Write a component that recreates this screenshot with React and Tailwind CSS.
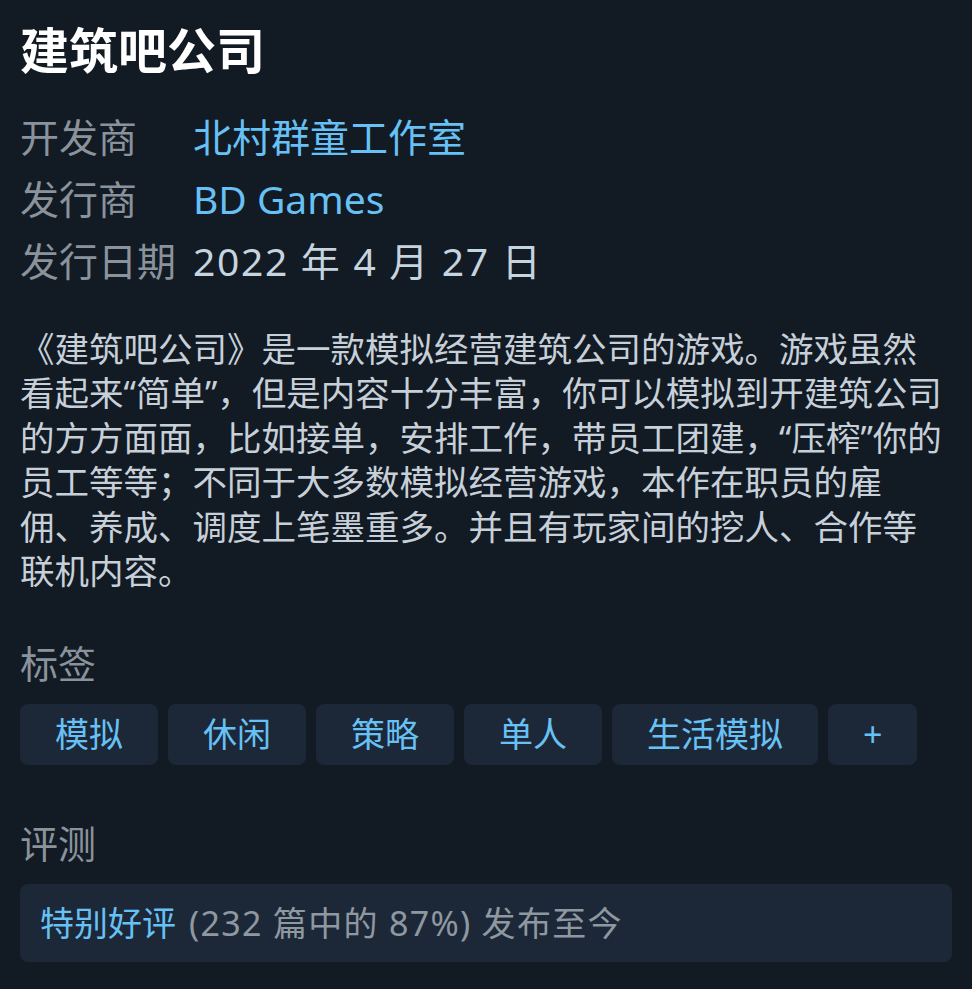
const FONT = { fontFamily: '"Noto Sans", "Noto Sans CJK SC", sans-serif' };

const TAGS = ['模拟', '休闲', '策略', '单人', '生活模拟', '+'];

function InfoRow({ label, children, valueClass }) {
  return (
    <div className="flex leading-[62px] text-[39px]">
      <span className="w-[173px] shrink-0 text-[#8a939c]">{label}</span>
      <span className={valueClass}>{children}</span>
    </div>
  );
}

export default function App() {
  return (
    <div className="min-h-screen w-[972px] h-[989px] overflow-hidden bg-[#121a24] px-5 pt-5" style={FONT}>
      {/* Title */}
      <h1 className="text-[49px] leading-[60px] font-bold text-white">建筑吧公司</h1>

      {/* Meta rows */}
      <div className="mt-[26px]">
        <InfoRow label="开发商" valueClass="text-[#67c1f5]">北村群童工作室</InfoRow>
        <InfoRow label="发行商" valueClass="text-[#67c1f5]">BD Games</InfoRow>
        <InfoRow label="发行日期" valueClass="text-[#c6d4df] tracking-[1.7px]">2022 年 4 月 27 日</InfoRow>
      </div>

      {/* Description */}
      <p className="mt-[35px] text-[34.5px] leading-[44.4px] text-[#c7d0d8] w-[928px]">
        《建筑吧公司》是一款模拟经营建筑公司的游戏。游戏虽然看起来“简单”，但是内容十分丰富，你可以模拟到开建筑公司的方方面面，比如接单，安排工作，带员工团建，“压榨”你的员工等等；不同于大多数模拟经营游戏，本作在职员的雇佣、养成、调度上笔墨重多。并且有玩家间的挖人、合作等联机内容。
      </p>

      {/* Tags */}
      <div className="mt-[45px] text-[38px] leading-[50px] text-[#8a939c]">标签</div>
      <div className="mt-4 flex gap-[10px]">
        {TAGS.map((t) => (
          <span
            key={t}
            className="h-[61px] px-[35px] flex items-center rounded-lg bg-[#1c2838] text-[34px] text-[#67c1f5]"
          >
            {t}
          </span>
        ))}
      </div>

      {/* Reviews */}
      <div className="mt-[53px] text-[38px] leading-[50px] text-[#8a939c]">评测</div>
      <div className="mt-4 h-[78px] w-[932px] rounded-lg bg-[#1c2838] flex items-center px-5 text-[34px]">
        <span className="text-[#67c1f5]">特别好评</span>
        <span className="ml-[13px] text-[#8f98a0] tracking-[1.3px]">(232 篇中的 87%) 发布至今</span>
      </div>
    </div>
  );
}
